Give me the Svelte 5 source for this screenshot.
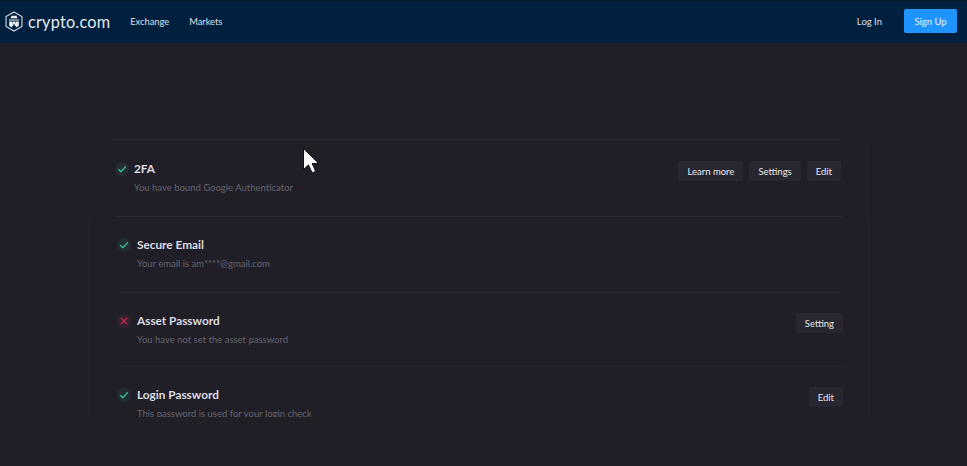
<script lang="ts">
  type Row = { title: string; desc: string; ok: boolean; actions: string[] };

  const first: Row[] = [
    { title: "2FA", desc: "You have bound Google Authenticator", ok: true, actions: ["Learn more", "Settings", "Edit"] },
  ];
  const rest: Row[] = [
    { title: "Secure Email", desc: "Your email is am****@gmail.com", ok: true, actions: [] },
    { title: "Asset Password", desc: "You have not set the asset password", ok: false, actions: ["Setting"] },
    { title: "Login Password", desc: "This password is used for your login check", ok: true, actions: ["Edit"] },
  ];
</script>

{#snippet row(item: Row)}
  <div class="row">
    <span class="status" class:bad={!item.ok}>
      <svg viewBox="0 0 14 14" width="14" height="14" fill="none" stroke-width="1.2">
        {#if item.ok}
          <path d="M3.3 7.2 5.9 9.6 10.8 4.4" stroke="#3ccf9f" />
        {:else}
          <path d="M3.8 3.8l6.4 6.4M10.2 3.8l-6.4 6.4" stroke="#d1274f" />
        {/if}
      </svg>
    </span>
    <div class="text">
      <div class="title">{item.title}</div>
      <div class="desc">{item.desc}</div>
    </div>
    <div class="actions">
      {#each item.actions as label}
        <button>{label}</button>
      {/each}
    </div>
  </div>
{/snippet}

<div class="page">
  <header>
    <a class="logo" href="#top">
      <svg viewBox="0 0 24 28" width="18" height="21">
        <path d="M12 1.2 22.6 7.3v13.4L12 26.8 1.4 20.7V7.3z" fill="none" stroke="#cfd7e0" stroke-width="1.5" />
        <path d="M8.6 6.2h6.8l1.2 3.4H7.4z" fill="#eef1f4" />
        <path d="M5 11.2h14l-.4 1.6H5.4z" fill="#eef1f4" />
        <path d="M5.6 14h4.2l1.2 5.4-2.6 2.4-2.8-2.2zM18.4 14h-4.2L13 19.4l2.6 2.4 2.8-2.2z" fill="#eef1f4" />
        <path d="M10.8 14h2.4l.5 3-1.7 1.8-1.7-1.8z" fill="#eef1f4" />
      </svg>
      <span>crypto.com</span>
    </a>
    <nav>
      <a href="#top">Exchange</a>
      <a href="#top">Markets</a>
    </nav>
    <div class="auth">
      <a href="#top">Log In</a>
      <button class="signup">Sign Up</button>
    </div>
  </header>

  <main>
    <section class="block-a">
      <div class="list">
        {#each first as item}
          {@render row(item)}
        {/each}
      </div>
    </section>
    <section class="block-b">
      <div class="list">
        {#each rest as item}
          {@render row(item)}
        {/each}
      </div>
    </section>
  </main>

  <svg class="cursor" viewBox="0 0 18 28" width="18" height="28">
    <path d="M1.5 1.5v21l5-4.6 3.6 8 3.6-1.6-3.6-7.8h6.6z" fill="#fff" stroke="#111" stroke-width="1" />
  </svg>
</div>

<style>
  :global(body) {
    margin: 0;
    background: #201e27;
  }

  .page {
    position: relative;
    width: 967px;
    height: 466px;
    overflow: hidden;
    background: #201e27;
    font-family: Lato, "Liberation Sans", sans-serif;
  }

  header {
    box-sizing: border-box;
    height: 43px;
    display: flex;
    align-items: center;
    padding: 0 10px 2px 5px;
    background: #01203f;
    border-top: 1px solid #0c1420;
  }

  a {
    color: #d9e0e8;
    text-decoration: none;
  }

  .logo {
    display: flex;
    align-items: center;
    gap: 5px;
    font-size: 16.3px;
    letter-spacing: 0.2px;
    color: #e4e8ee;
  }

  nav {
    display: flex;
    gap: 20px;
    margin-left: 20px;
    font-size: 9.3px;
  }

  .auth {
    margin-left: auto;
    display: flex;
    align-items: center;
    gap: 22px;
    font-size: 9.5px;
  }

  .signup {
    width: 53px;
    height: 24px;
    border: 0;
    border-radius: 2px;
    background: #1f94ff;
    color: #eaf4ff;
    font: inherit;
  }

  main {
    padding-top: 96px;
  }

  .block-a {
    box-sizing: border-box;
    width: 778px;
    margin-left: 89px;
    padding: 0 24px 0 25px;
    border-right: 1px solid #25242d;
  }

  .block-a .list {
    border-top: 1px solid #27262f;
    border-bottom: 1px solid #2a2932;
  }

  .block-a .row {
    height: 76px;
    padding-top: 21px;
  }

  .block-a .status {
    margin-left: 1px;
  }

  .block-a .text {
    margin-left: 5px;
  }

  .block-b {
    box-sizing: border-box;
    width: 780px;
    height: 200px;
    margin-left: 89px;
    padding: 0 24px 0 27px;
    overflow: hidden;
    border-left: 1px solid #25242d;
    border-right: 1px solid #25242d;
  }

  .block-b .row {
    height: 76px;
    padding-top: 20px;
    border-bottom: 1px solid #25242d;
  }

  .block-b .row:nth-child(2) {
    height: 74px;
  }

  .row {
    box-sizing: border-box;
    display: flex;
    align-items: flex-start;
    padding-right: 1px;
  }

  .status {
    flex: none;
    display: flex;
    align-items: center;
    justify-content: center;
    width: 14px;
    height: 14px;
    border-radius: 50%;
    background: #232d36;
    margin-top: 1px;
  }

  .status.bad {
    background: #33212e;
  }

  .text {
    margin-left: 6px;
  }

  .title {
    font-size: 11.8px;
    font-weight: 700;
    line-height: 16px;
    color: #dcdce2;
  }

  .desc {
    margin-top: 4px;
    font-size: 9.5px;
    line-height: 14px;
    color: #65646e;
  }

  .actions {
    margin-left: auto;
    display: flex;
    gap: 6px;
  }

  .actions button {
    height: 20px;
    padding: 0 9px;
    border: 0;
    border-radius: 2px;
    background: #282731;
    color: #e8e8ec;
    font-family: Lato, sans-serif;
    font-size: 9.5px;
  }

  .cursor {
    position: absolute;
    left: 302px;
    top: 147px;
  }
</style>
